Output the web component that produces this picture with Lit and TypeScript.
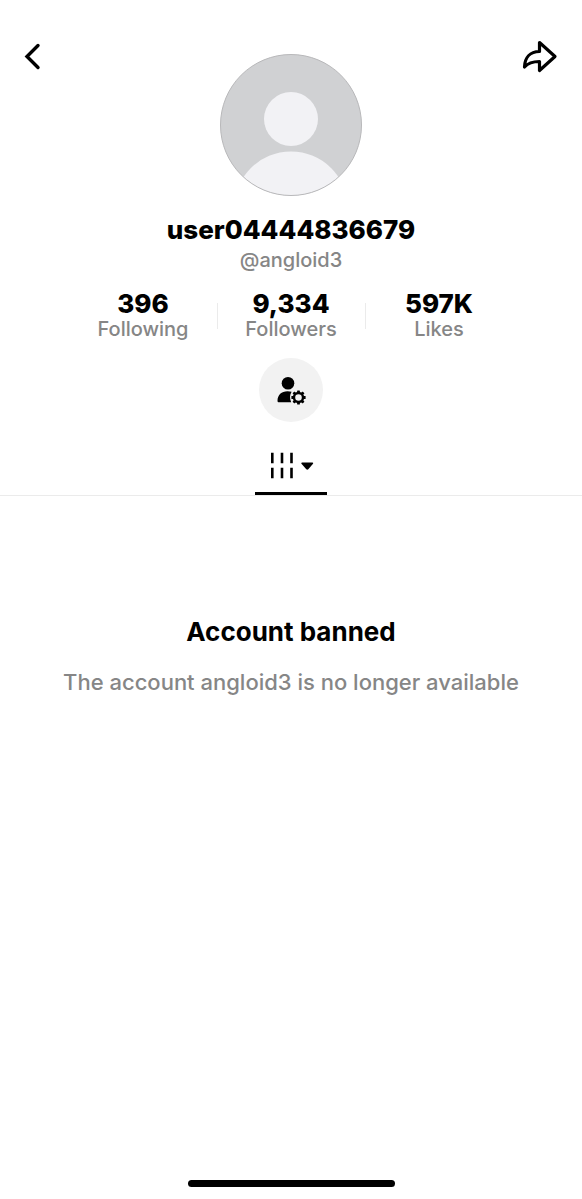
import { LitElement, html, css, svg } from 'lit';
import { customElement, property } from 'lit/decorators.js';

@customElement('profile-stat')
class ProfileStat extends LitElement {
  @property() value = '';
  @property() label = '';

  static styles = css`
    :host { display: block; text-align: center; }
    .link { display: block; color: #000; text-decoration: none; }
    .value { display: block; font-size: 26px; line-height: 26px; font-weight: 800; }
    .label { display: block; font-size: 20px; line-height: 24px; font-weight: 550; color: #868686; }
  `;

  render() {
    return html`<a class="link" href="#${this.label.toLowerCase()}">
      <span class="value">${this.value}</span>
      <span class="label">${this.label}</span>
    </a>`;
  }
}

@customElement('app-root')
class AppRoot extends LitElement {
  static styles = css`
    :host {
      display: flex;
      flex-direction: column;
      min-height: 100vh;
      box-sizing: border-box;
      background: #fff;
      color: #000;
      font-family: Inter, "Liberation Sans", sans-serif;
    }
    button {
      border: 0;
      margin: 0;
      padding: 0;
      background: none;
      color: inherit;
      font: inherit;
      cursor: pointer;
    }
    svg { display: block; }
    header {
      display: flex;
      justify-content: space-between;
      align-items: flex-start;
      padding: 36px 22px 0;
    }
    .bar-button {
      display: flex;
      align-items: center;
      justify-content: center;
      width: 40px;
      height: 40px;
    }
    .back { justify-content: flex-start; }
    .avatar { margin-top: 18px; }
    .profile {
      display: flex;
      flex-direction: column;
      align-items: center;
    }
    h1 {
      margin: 18px 0 0;
      font-size: 26px;
      line-height: 32px;
      font-weight: 800;
    }
    .handle {
      margin: 2px 0 0;
      font-size: 20px;
      line-height: 24px;
      font-weight: 550;
      color: #868686;
    }
    .stats {
      display: flex;
      justify-content: center;
      align-items: center;
      margin-top: 19px;
    }
    .stats profile-stat { width: 147px; }
    .divider { width: 1px; height: 26px; background: #ebebeb; }
    .manage {
      display: flex;
      align-items: center;
      justify-content: center;
      width: 64px;
      height: 64px;
      margin-top: 17px;
      border-radius: 50%;
      background: #f2f2f2;
    }
    nav {
      display: flex;
      justify-content: center;
      margin-top: 18px;
      border-bottom: 1px solid #ebebeb;
    }
    .tab {
      display: flex;
      align-items: center;
      justify-content: center;
      width: 72px;
      height: 55px;
      box-sizing: border-box;
      border-bottom: 3px solid #000;
    }
    main {
      flex: 1;
      padding: 120px 24px 24px;
      text-align: center;
    }
    h2 {
      margin: 0;
      font-size: 26px;
      line-height: 32px;
      font-weight: 700;
    }
    .note {
      margin: 20px 0 0;
      font-size: 22px;
      line-height: 28px;
      font-weight: 500;
      color: #868686;
    }
    .home {
      width: 207px;
      height: 7px;
      margin: 0 auto 12px;
      border-radius: 4px;
      background: #000;
    }
  `;

  render() {
    const teeth = [0, 45, 90, 135, 180, 225, 270, 315];
    return html`
      <header>
        <button class="bar-button back" aria-label="Back">
          <svg width="24" height="30" viewBox="0 0 24 30" fill="none" stroke="#000" stroke-width="3.4" stroke-linecap="round" stroke-linejoin="miter">
            <path d="M16 4.500L5 15.500L16 26.500" />
          </svg>
        </button>
        <svg class="avatar" width="142" height="142" viewBox="0 0 142 142" role="img" aria-label="Profile picture">
          <defs><clipPath id="disc"><circle cx="71" cy="71" r="70.5" /></clipPath></defs>
          <circle cx="71" cy="71" r="70.5" fill="#d0d1d3" />
          <circle cx="71" cy="65" r="27" fill="#f2f2f5" />
          <circle cx="71" cy="154.500" r="57" fill="#f2f2f5" clip-path="url(#disc)" />
          <circle cx="71" cy="71" r="70.5" fill="none" stroke="#b8b8ba" />
        </svg>
        <button class="bar-button" aria-label="Share">
          <svg width="40" height="40" viewBox="0 0 40 40" fill="none" stroke="#000" stroke-width="3.2" stroke-linejoin="round">
            <path d="M19.500 6.500L35 20.500L19.500 34.500V25.500C12.500 25.500 8 27 4.500 31C4.800 21.500 10 15.700 19.500 15.500Z" />
          </svg>
        </button>
      </header>
      <section class="profile">
        <h1>user04444836679</h1>
        <p class="handle">@angloid3</p>
        <div class="stats">
          <profile-stat value="396" label="Following"></profile-stat>
          <span class="divider"></span>
          <profile-stat value="9,334" label="Followers"></profile-stat>
          <span class="divider"></span>
          <profile-stat value="597K" label="Likes"></profile-stat>
        </div>
        <button class="manage" aria-label="Manage account">
          <svg width="32" height="32" viewBox="0 0 32 32">
            <circle cx="13" cy="9.300" r="6.300" />
            <path d="M2.500 27C2.500 20.800 6.500 17.200 12.500 17.200C14.200 17.200 15.500 17.400 16.600 17.800C14.600 20.800 14.600 24.900 16.200 28.300H4C3 28.300 2.500 27.800 2.500 27Z" />
            <circle cx="23.500" cy="23.500" r="4.500" fill="none" stroke="#000" stroke-width="2.400" />
            ${teeth.map(a => svg`<rect x="22.100" y="16.400" width="2.800" height="2.800" rx="0.500" transform="rotate(${a} 23.500 23.500)" />`)}
          </svg>
        </button>
      </section>
      <nav>
        <button class="tab" aria-label="Videos">
          <svg width="46" height="30" viewBox="0 0 46 30">
            <path d="M4.300 3.500V11.500M14 3.500V11.500M23.500 3.500V11.500M4.300 18.500V26.500M14 18.500V26.500M23.500 18.500V26.500" stroke="#000" stroke-width="2.600" stroke-linecap="square" transform="translate(0 -0.500)" />
            <path d="M34 11.500H44.500Q45.800 11.800 45 12.800L40.300 18.300Q39.300 19.200 38.300 18.300L33.500 12.800Q32.700 11.800 34 11.500Z" />
          </svg>
        </button>
      </nav>
      <main>
        <h2>Account banned</h2>
        <p class="note">The account angloid3 is no longer available</p>
      </main>
      <div class="home"></div>
    `;
  }
}
